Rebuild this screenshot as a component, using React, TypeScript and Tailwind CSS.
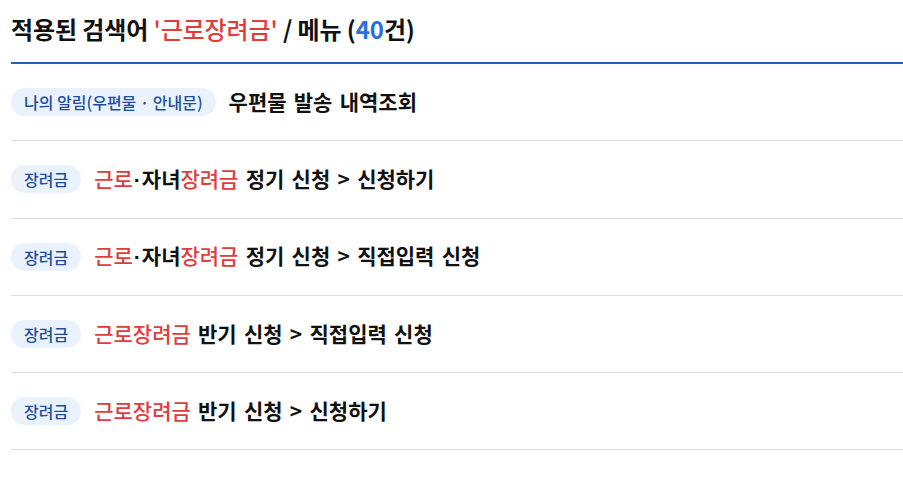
const FONT = { fontFamily: '"Noto Sans CJK KR", "Noto Sans", sans-serif' }

type Part = { t: string; hl?: boolean; dot?: boolean }

const rows: { badge: string; parts: Part[] }[] = [
  { badge: '나의 알림(우편물 · 안내문)', parts: [{ t: '우편물 발송 내역조회' }] },
  {
    badge: '장려금',
    parts: [{ t: '근로', hl: true }, { t: '·', dot: true }, { t: '자녀' }, { t: '장려금', hl: true }, { t: ' 정기 신청 > 신청하기' }],
  },
  {
    badge: '장려금',
    parts: [{ t: '근로', hl: true }, { t: '·', dot: true }, { t: '자녀' }, { t: '장려금', hl: true }, { t: ' 정기 신청 > 직접입력 신청' }],
  },
  { badge: '장려금', parts: [{ t: '근로장려금', hl: true }, { t: ' 반기 신청 > 직접입력 신청' }] },
  { badge: '장려금', parts: [{ t: '근로장려금', hl: true }, { t: ' 반기 신청 > 신청하기' }] },
]

export default function App() {
  return (
    <div className="w-[903px] h-[477px] bg-white pl-[11px]" style={FONT}>
      {/* Header */}
      <div className="h-[64px] flex items-center border-b-[2px] border-[#2a5bb8]">
        <h2 className="text-[24px] font-bold text-[#111] pb-[4px] tracking-[-0.1px]">
          적용된 검색어 <span className="text-[#e03c3c] font-medium">'근로장려금'</span> / 메뉴 (<span className="text-[#2a6fdb]">40</span>건)
        </h2>
      </div>

      {/* Results */}
      <ul>
        {rows.map((row, i) => (
          <li key={i} className="h-[77.25px] flex items-center gap-[13px] border-b border-[#dedede]">
            <span className="h-[28px] px-[13px] rounded-full bg-[#eaf3fd] text-[#1f4e9e] text-[16px] font-medium flex items-center">
              {row.badge}
            </span>
            <span className="text-[21px] font-semibold text-[#111] [word-spacing:2.5px]">
              {row.parts.map((p, j) =>
                p.dot ? (
                  <span key={j} className="font-['Liberation_Sans',sans-serif] px-[1px]">{p.t}</span>
                ) : (
                  <span key={j} className={p.hl ? 'text-[#e03c3c] font-medium' : ''}>
                    {p.t}
                  </span>
                )
              )}
            </span>
          </li>
        ))}
      </ul>
    </div>
  )
}
